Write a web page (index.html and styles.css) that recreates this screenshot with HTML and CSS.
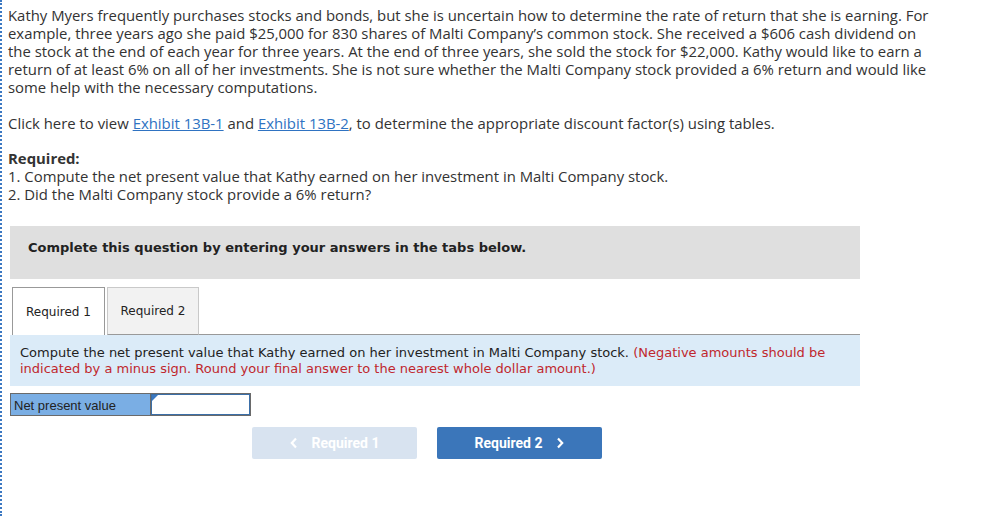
FILE: index.html
```html
<!DOCTYPE html>
<html>
<head>
<meta charset="utf-8">
<link rel="stylesheet" href="styles.css">
</head>
<body>
<div class="page">
  <p class="intro">Kathy Myers frequently purchases stocks and bonds, but she is uncertain how to determine the rate of return that she is earning. For example, three years ago she paid $25,000 for 830 shares of Malti Company’s common stock. She received a $606 cash dividend on the stock at the end of each year for three years. At the end of three years, she sold the stock for $22,000. Kathy would like to earn a return of at least 6% on all of her investments. She is not sure whether the Malti Company stock provided a 6% return and would like some help with the necessary computations.</p>
  <p class="click">Click here to view <a href="#" class="link">Exhibit 13B-1</a> and <a href="#" class="link">Exhibit 13B-2</a>, to determine the appropriate discount factor(s) using tables.</p>
  <div class="required">
    <div class="req-title">Required:</div>
    <div>1. Compute the net present value that Kathy earned on her investment in Malti Company stock.</div>
    <div>2. Did the Malti Company stock provide a 6% return?</div>
  </div>
  <div class="panel">
    <div class="banner">Complete this question by entering your answers in the tabs below.</div>
    <div class="tabs">
      <div class="tab active">Required 1</div>
      <div class="tab">Required 2</div>
      <div class="tab-rest"></div>
    </div>
    <div class="info"><span>Compute the net present value that Kathy earned on her investment in Malti Company stock.</span> <span class="warn">(Negative amounts should be indicated by a minus sign. Round your final answer to the nearest whole dollar amount.)</span></div>
    <div class="answer-row">
      <div class="label-cell">Net present value</div>
      <div class="input-cell"><span class="corner"></span></div>
    </div>
    <div class="nav">
      <button class="btn prev"><svg class="chev" width="8" height="12" viewBox="0 0 8 12"><path d="M6 1.5 L1.8 6 L6 10.5" fill="none" stroke="#fff" stroke-width="2.2"/></svg>Required 1</button>
      <button class="btn next">Required 2<svg class="chev" width="8" height="12" viewBox="0 0 8 12"><path d="M2 1.5 L6.2 6 L2 10.5" fill="none" stroke="#fff" stroke-width="2.2"/></svg></button>
    </div>
  </div>
</div>
</body>
</html>
```
FILE: styles.css
```css
html, body {
  margin: 0;
  padding: 0;
  background: #fff;
}
body {
  width: 1003px;
  height: 516px;
  overflow: hidden;
}
.page {
  border-left: 2px dotted #3b78c2;
  height: 516px;
  box-sizing: border-box;
  padding: 6px 0 0 6px;
  font-family: "Open Sans", "Liberation Sans", sans-serif;
  font-size: 14.9px;
  line-height: 18px;
  color: #333;
}
p {
  margin: 0;
}
.intro {
  width: 930px;
}
.click {
  margin-top: 18px;
}
.link {
  color: #2f73c2;
  text-decoration: underline;
}
.required {
  margin-top: 17px;
}
.req-title {
  font-weight: bold;
}
.panel {
  width: 850px;
  margin: 23px 0 0 2px;
}
.banner {
  background: #dfdfdf;
  height: 53px;
  box-sizing: border-box;
  padding: 14px 18px 0;
  font-family: "DejaVu Sans", Verdana, sans-serif;
  font-weight: bold;
  font-size: 13px;
  line-height: 16px;
  color: #222;
}
.tabs {
  display: flex;
  margin-top: 8px;
  height: 48px;
  padding-left: 2px;
}
.tab {
  box-sizing: border-box;
  width: 92px;
  border: 1px solid #c9c9c9;
  border-bottom: 1px solid #999;
  background: #f2f2f2;
  font-family: "DejaVu Sans", Verdana, sans-serif;
  font-size: 12px;
  color: #222;
  display: flex;
  align-items: center;
  justify-content: center;
  margin-right: 2px;
}
.tab.active {
  width: 93px;
  background: #fff;
  border: 1px solid #999;
  border-bottom: none;
}
.tab-rest {
  flex: 1;
  border-bottom: 1px solid #999;
  margin-left: -2px;
}
.info {
  background: #dbebf8;
  height: 51px;
  box-sizing: border-box;
  padding: 10px 10px 0;
  font-family: "DejaVu Sans", Verdana, sans-serif;
  font-size: 13px;
  line-height: 16px;
  color: #222;
}
.warn {
  color: #c0272d;
}
.answer-row {
  display: flex;
  margin-top: 7px;
  height: 23px;
}
.label-cell {
  box-sizing: border-box;
  width: 140px;
  background: #7aaee4;
  border: 1px solid #6a6a6a;
  border-right: none;
  font-family: "Liberation Sans", Arial, sans-serif;
  font-size: 13px;
  color: #222;
  padding: 3px 0 0 3px;
}
.input-cell {
  position: relative;
  box-sizing: border-box;
  width: 101px;
  background: #fff;
  border: 1px solid #6a6a6a;
  box-shadow: inset 0 0 0 1px #3b6fa8;
}
.corner {
  position: absolute;
  left: 1px;
  top: 1px;
  width: 0;
  height: 0;
  border-top: 6px solid #3b78c2;
  border-right: 6px solid transparent;
}
.nav {
  display: flex;
  margin: 11px 0 0 242px;
  gap: 20px;
}
.btn {
  width: 165px;
  height: 32px;
  border: none;
  border-radius: 2px;
  color: #fff;
  font-family: "Roboto", "Liberation Sans", sans-serif;
  font-weight: bold;
  font-size: 14px;
  display: flex;
  align-items: center;
  justify-content: center;
  gap: 14px;
  padding: 0;
}
.btn.prev {
  background: #d8e3f0;
}
.btn.next {
  background: #3b76ba;
}
.chev {
  display: block;
}
```
